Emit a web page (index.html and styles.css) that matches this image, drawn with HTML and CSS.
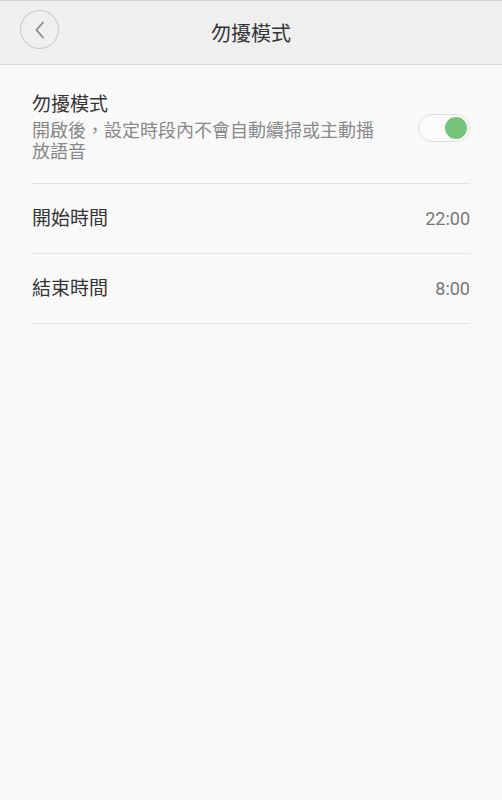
FILE: index.html
```html
<!DOCTYPE html>
<html lang="zh-Hant">
<head>
    <meta charset="UTF-8">
    <title>勿擾模式</title>
    <link rel="stylesheet" href="styles.css">
</head>
<body>
    <div class="header">
        <div class="back">
            <svg width="14" height="20" viewBox="0 0 14 20">
                <path d="M10 2.5 L3.5 10 L10 17.5" fill="none" stroke="#888" stroke-width="1.8" stroke-linecap="round" stroke-linejoin="round"/>
            </svg>
        </div>
        <h1>勿擾模式</h1>
    </div>

    <div class="list">
        <div class="row row-switch">
            <div class="texts">
                <div class="label">勿擾模式</div>
                <div class="desc">開啟後，設定時段內不會自動續掃或主動播放語音</div>
            </div>
            <div class="switch on"><span class="knob"></span></div>
        </div>
        <div class="row">
            <div class="label">開始時間</div>
            <div class="value">22:00</div>
        </div>
        <div class="row">
            <div class="label">結束時間</div>
            <div class="value">8:00</div>
        </div>
    </div>
</body>
</html>
```

FILE: styles.css
```css
body {
    margin: 0;
    background-color: #f9f9f9;
    font-family: Roboto, "Noto Sans CJK TC", sans-serif;
    color: #333;
}

.header {
    height: 63px;
    background-color: #efefef;
    border-top: 1px solid #d4d4d4;
    border-bottom: 1px solid #dcdcdc;
    display: flex;
    align-items: center;
    justify-content: center;
    position: relative;
}

.header h1 {
    margin: 0;
    font-size: 20px;
    font-weight: normal;
    color: #333;
}

.back {
    position: absolute;
    left: 20px;
    top: 9px;
    width: 37px;
    height: 37px;
    border: 1px solid #c4c4c4;
    border-radius: 50%;
    display: flex;
    align-items: center;
    justify-content: center;
}

.list {
    padding: 0 32px 0 32px;
}

.row {
    display: flex;
    align-items: center;
    justify-content: space-between;
    height: 69px;
    border-bottom: 1px solid #e2e2e2;
}

.row-switch {
    height: auto;
    padding: 28px 0 21px 0;
}

.texts {
    width: 350px;
}

.label {
    font-size: 19px;
    line-height: 24px;
    color: #333;
}

.desc {
    font-size: 18px;
    line-height: 21px;
    color: #888;
    margin-top: 3px;
}

.value {
    font-size: 18px;
    color: #777;
}

.switch {
    width: 46px;
    height: 26px;
    border: 1px solid #dedede;
    border-radius: 14px;
    background-color: #fbfbfb;
    display: flex;
    align-items: center;
    justify-content: flex-end;
    padding: 0 2px;
}

.knob {
    width: 22px;
    height: 22px;
    border-radius: 50%;
    background-color: #77c37c;
}
```
